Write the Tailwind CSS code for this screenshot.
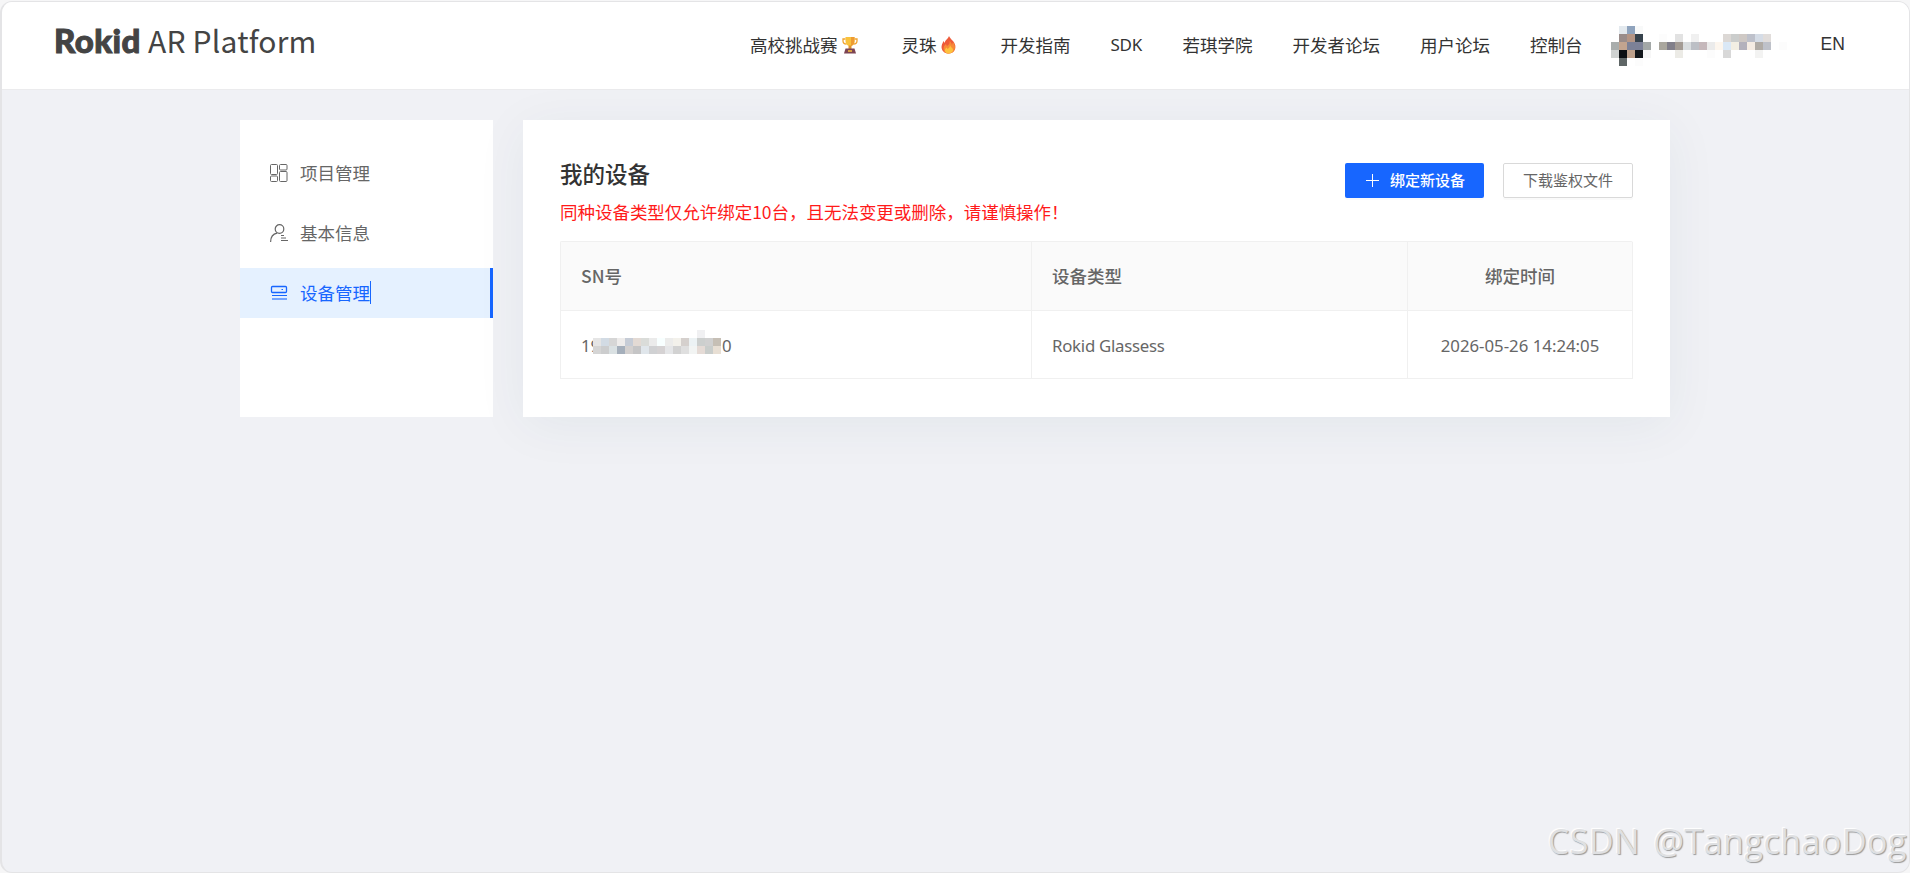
<!DOCTYPE html>
<html lang="zh-CN">
<head>
  <meta charset="UTF-8">
  <meta name="viewport" content="width=device-width, initial-scale=1">
  <script src="https://cdn.jsdelivr.net/npm/@tailwindcss/browser@4"></script>
  <title>Rokid AR Platform</title>
</head>
<body class="h-screen overflow-hidden bg-[#f6f6f7] pt-px font-['Noto_Sans_CJK_SC',sans-serif] text-[17.5px] text-[#333]">
  <div class="relative h-[872px] w-[1910px] overflow-hidden rounded-xl border border-l-2 border-[#e4e4e6] bg-[#f0f1f5]">
    <!-- Header -->
    <header class="flex h-[88px] items-start border-b border-[#ebebed] bg-white pl-[52px]">
      <div class="flex w-[696px] items-baseline pt-[16px] leading-[44px] text-[#444]">
        <span class="w-[94px] font-[Lato] text-[33px] font-black tracking-[0.4px] [-webkit-text-stroke:1px_#444]">Rokid</span>
        <span class="text-[30px] font-normal tracking-[0.2px] whitespace-nowrap">AR Platform</span>
      </div>
      <nav class="flex h-[86px] items-center gap-10 whitespace-nowrap">
        <a class="flex items-center">高校挑战赛
          <svg class="mr-1 ml-1 h-[18px] w-[16px]" viewBox="0 0 16 18">
            <path d="M3.5 3H1v2c0 2 1.500 3 3.500 3M12.500 3H15v2c0 2-1.500 3-3.500 3" fill="none" stroke="#f0a32f" stroke-width="1.300"/>
            <path d="M3.500 1h9v4c0 3-2 5-4.500 5S3.500 8 3.500 5z" fill="#f9c23c"/>
            <path d="M9 1h3.500v4c0 3-1.500 4.500-3.500 5z" fill="#ee9b32"/>
            <path d="M6.500 9.500h3V13h-3z" fill="#e0922d"/>
            <path d="M3.500 12.500h9l1.500 5H2z" fill="#7d4553"/>
            <path d="M6 14.300h4v1.500H6z" fill="#f9c23c"/>
          </svg>
        </a>
        <a class="flex items-center">灵珠
          <svg class="mr-[5px] ml-1 h-[18px] w-[15px]" viewBox="0 0 15 18">
            <path d="M8 0c1 3 5.500 5 6.300 9.500C15 14 12 17.500 7.500 17.500S0 14 .6 10C1 7.500 2 6.500 2.500 5l1.200 2C4 4 7 3 8 0z" fill="#ee5a3a"/>
            <path d="M12 6c2 3 2.500 5 1.500 8-1 2-3 3.500-6 3.500s-5-2-5-5c0-2 1-3 2.500-4.500.5 1 .5 1.500 1 2C8 8.500 9 7.500 8.500 5c1.500 1 2 2 2.500 4z" fill="#f78a38"/>
            <path d="M9 9c.5 2.500 3.500 3 3 5.500-.3 2-2.300 3-4.500 3s-4-1.500-3.500-3.800c.2-1 1-1.700 1.500-2.200l1 1.500C8 12 9 11 9 9z" fill="#fdc23e"/>
          </svg>
        </a>
        <a>开发指南</a>
        <a class="w-[32px] font-['Noto_Sans'] text-[17px] tracking-[-0.3px]">SDK</a>
        <a>若琪学院</a>
        <a>开发者论坛</a>
        <a>用户论坛</a>
        <a>控制台</a>
      </nav>
      <!-- Masked avatar and user name -->
      <svg class="mt-[24px] ml-[28px] h-[40px] w-[176px] shrink-0" viewBox="0 0 22 5" shape-rendering="crispEdges">
        <path fill="#e3e9ee" d="M1 0h1v1H1z"/><path fill="#8fa3bd" d="M2 0h1v1H2z"/><path fill="#f8f9f9" d="M3 0h1v1H3z"/>
        <path fill="#998c8a" d="M1 1h1v1H1z"/><path fill="#b49585" d="M2 1h1v1H2z"/><path fill="#36424c" d="M3 1h1v1H3z"/>
        <path fill="#a9adac" d="M0 2h1v1H0z"/><path fill="#c2a48f" d="M1 2h1v1H1z"/><path fill="#7c8197" d="M2 2h2v1H2z"/><path fill="#a3a8a7" d="M4 2h1v1H4z"/>
        <path fill="#cfd2d1" d="M0 3h1v1H0z"/><path fill="#0c0f12" d="M1 3h1v1H1z"/><path fill="#bda18c" d="M2 3h1v1H2z"/><path fill="#12171b" d="M3 3h1v1H3z"/><path fill="#f7f7f7" d="M4 3h1v1H4z"/>
        <path fill="#5f6666" d="M1 4h1v1H1z"/><path fill="#fcfcfc" d="M3 4h1v1H3zM6 1h1v1H6zM12 3h1v1h-1zM21 2h1v1h-1z"/>
        <path fill="#e2e2e2" d="M8 1h1v1H8z"/><path fill="#f0f0f0" d="M10 1h1v1h-1z"/>
        <path fill="#dcd8d5" d="M14 1h1v1h-1z"/><path fill="#cbcdcc" d="M15 1h1v1h-1z"/><path fill="#cfc9c5" d="M16 1h1v1h-1z"/><path fill="#bec1cb" d="M17 1h1v1h-1z"/><path fill="#d5dce6" d="M18 1h1v1h-1z"/><path fill="#e1dddb" d="M19 1h1v1h-1z"/>
        <path fill="#aaa79e" d="M6 2h1v1H6z"/><path fill="#817f8a" d="M7 2h1v1H7z"/><path fill="#a39b94" d="M8 2h1v1H8z"/><path fill="#d9dddf" d="M9 2h1v1H9z"/><path fill="#bcbfc5" d="M10 2h1v1h-1z"/><path fill="#c5b8bb" d="M11 2h1v1h-1z"/><path fill="#ebebeb" d="M12 2h1v1h-1z"/><path fill="#fdf6ee" d="M13 2h1v1h-1z"/>
        <path fill="#dae8f6" d="M14 2h1v1h-1z"/><path fill="#f2eee3" d="M15 2h1v1h-1z"/><path fill="#b3b1bc" d="M16 2h1v1h-1z"/><path fill="#f5ece3" d="M17 2h1v1h-1z"/><path fill="#b0aba5" d="M18 2h1v1h-1z"/><path fill="#bec1c9" d="M19 2h1v1h-1z"/>
        <path fill="#ecebe6" d="M8 3h1v1H8z"/><path fill="#d8d8d8" d="M14 3h1v1h-1z"/><path fill="#f3f3f2" d="M18 3h1v1h-1z"/>
      </svg>
      <span class="mt-[28px] ml-[34px] font-['Liberation_Sans'] leading-7">EN</span>
    </header>

    <div class="mt-[30px] ml-[238px] flex gap-[30px]">
      <!-- Sidebar -->
      <aside class="h-[297px] w-[253px] bg-white pt-[28px] text-[#666]">
        <div class="flex h-[50px] items-center pl-[30px]">
          <svg class="mr-[12px] size-[18px]" viewBox="0 0 18 18" fill="none" stroke="currentColor">
            <rect x=".5" y=".5" width="7" height="10" rx="1"/><rect x="9.500" y=".5" width="7.500" height="5.500" rx="1"/>
            <rect x=".5" y="12" width="7" height="5.500" rx="1"/><rect x="9.500" y="7.500" width="7.500" height="10" rx="1"/>
          </svg>
          项目管理
        </div>
        <div class="mt-[10px] flex h-[50px] items-center pl-[30px]">
          <svg class="mr-[12px] size-[18px]" viewBox="0 0 18 18" fill="none" stroke="currentColor" stroke-width="1.200">
            <circle cx="9.500" cy="5" r="4.300"/><path d="M.6 18c0-4.500 2.500-8 6.500-8.800M11 11.500h3M11 14h5M11 16.500h7"/>
          </svg>
          基本信息
        </div>
        <div class="mt-[10px] flex h-[50px] items-center border-r-[3px] border-[#1766ff] bg-[#e5f1ff] pl-[30px] text-[#1766ff]">
          <svg class="mr-[12px] size-[18px]" viewBox="0 0 18 18" fill="none" stroke="currentColor">
            <rect x="1.500" y="2.500" width="15" height="6" rx="1" stroke-width="1.300"/><path d="M11.500 5.500h1.500"/><path d="M2 11.500h15"/><path d="M2 15h15" stroke-width="2" opacity=".55"/>
          </svg>
          <span class="mb-px -mr-px border-r border-[#1766ff] leading-[23px]">设备管理</span>
        </div>
      </aside>

      <!-- Devices -->
      <main class="h-[297px] w-[1147px] bg-white px-[37px] pt-[35px] shadow-[0_8px_50px_0_rgba(0,60,90,0.06)]">
        <div class="flex h-[86px] justify-between">
          <div>
            <h1 class="text-[22.5px] leading-[37px] font-medium">我的设备</h1>
            <p class="leading-[39px] tracking-[-0.03px] text-[#ff1a1a]">同种设备类型仅允许绑定10台，且无法变更或删除，请谨慎操作！</p>
          </div>
          <div class="mt-[8px] flex gap-[19px] text-[15px]">
            <button class="flex h-[35px] w-[139px] items-center rounded-[2px] bg-[#1766ff] pl-[21px] font-medium text-white shadow-[0_2px_0_rgba(0,0,0,0.02)]">
              <svg class="mr-[11px] size-[13px]" viewBox="0 0 13 13" stroke="currentColor"><path d="M6.500 0v13M0 6.500h13"/></svg>
              绑定新设备
            </button>
            <button class="h-[35px] w-[130px] rounded-[2px] border border-[#d9d9d9] text-[#666] shadow-[0_2px_0_rgba(0,0,0,0.02)]">下载鉴权文件</button>
          </div>
        </div>
        <table class="w-[1073px] table-fixed border-separate border-spacing-0 rounded-t-[2px] border-t border-l border-[#f0f0f0] text-[#666]">
          <thead>
            <tr class="h-[69px] bg-[#fafafa] text-left">
              <th class="w-[471px] border-r border-b border-[#f0f0f0] px-5 font-medium">SN号</th>
              <th class="border-r border-b border-[#f0f0f0] px-5 font-medium">设备类型</th>
              <th class="w-[225px] border-r border-b border-[#f0f0f0] text-center font-medium">绑定时间</th>
            </tr>
          </thead>
          <tbody>
            <tr class="h-[68px] font-['Noto_Sans'] text-[16.8px]">
              <td class="border-r border-b border-[#f0f0f0] px-5">
                <div class="flex items-center pt-[3px]">
                  <span class="w-[12px] whitespace-nowrap">19</span>
                  <!-- Masked digits -->
                  <svg class="relative mb-[8px] h-[24px] w-[128px]" viewBox="0 0 16 3" shape-rendering="crispEdges">
                    <path fill="#f0f0f2" d="M13 0h1v1h-1z"/>
                    <path fill="#e5e5e5" d="M0 1h1v1H0z"/><path fill="#d2dbe4" d="M1 1h1v1H1z"/><path fill="#d6d6d6" d="M2 1h1v1H2z"/><path fill="#eeeceb" d="M3 1h1v1H3z"/><path fill="#c6ccd6" d="M4 1h1v1H4z"/><path fill="#e3dad4" d="M5 1h1v1H5z"/><path fill="#dadcd9" d="M6 1h1v1H6z"/><path fill="#ebebeb" d="M7 1h1v1H7z"/><path fill="#f8ffff" d="M8 1h1v1H8z"/><path fill="#ececeb" d="M9 1h1v1H9z"/><path fill="#f3f1eb" d="M10 1h1v1h-1z"/><path fill="#d5d0cd" d="M11 1h1v1h-1z"/><path fill="#ecf2f4" d="M12 1h1v1h-1z"/><path fill="#cccfce" d="M13 1h1v1h-1z"/><path fill="#d0d0d0" d="M14 1h1v1h-1z"/><path fill="#c6bfb5" d="M15 1h1v1h-1z"/>
                    <path fill="#d5d5d5" d="M0 2h1v1H0z"/><path fill="#cccdce" d="M1 2h1v1H1z"/><path fill="#dae1e3" d="M2 2h1v1H2z"/><path fill="#a5afbb" d="M3 2h1v1H3z"/><path fill="#d3d0cf" d="M4 2h1v1H4z"/><path fill="#c5c5c6" d="M5 2h1v1H5z"/><path fill="#e0e6eb" d="M6 2h1v1H6z"/><path fill="#d0d1d3" d="M7 2h1v1H7z"/><path fill="#d5d2d3" d="M8 2h1v1H8z"/><path fill="#e5e6e8" d="M9 2h1v1H9z"/><path fill="#d2d2d2" d="M10 2h1v1h-1z"/><path fill="#dfdfdf" d="M11 2h1v1h-1z"/><path fill="#f2f4f3" d="M12 2h1v1h-1z"/><path fill="#e5dbd6" d="M13 2h1v1h-1z"/><path fill="#c9cdcb" d="M14 2h1v1h-1z"/><path fill="#e8dfd4" d="M15 2h1v1h-1z"/>
                  </svg>
                  <span class="ml-px">0</span>
                </div>
              </td>
              <td class="border-r border-b border-[#f0f0f0] px-5 pt-[2px] tracking-[-0.25px]">Rokid Glassess</td>
              <td class="border-r border-b border-[#f0f0f0] pt-[2px] text-center">2026-05-26 14:24:05</td>
            </tr>
          </tbody>
        </table>
      </main>
    </div>

    <div class="absolute right-[2px] bottom-[6px] font-['Open_Sans'] text-[34px] leading-[50px] tracking-[0.5px] [word-spacing:4px] whitespace-nowrap text-[#dfe0e2] [text-shadow:1px_1px_1px_#999,-1px_-1px_1px_#fff]">CSDN @TangchaoDog</div>
  </div>
</body>
</html>
